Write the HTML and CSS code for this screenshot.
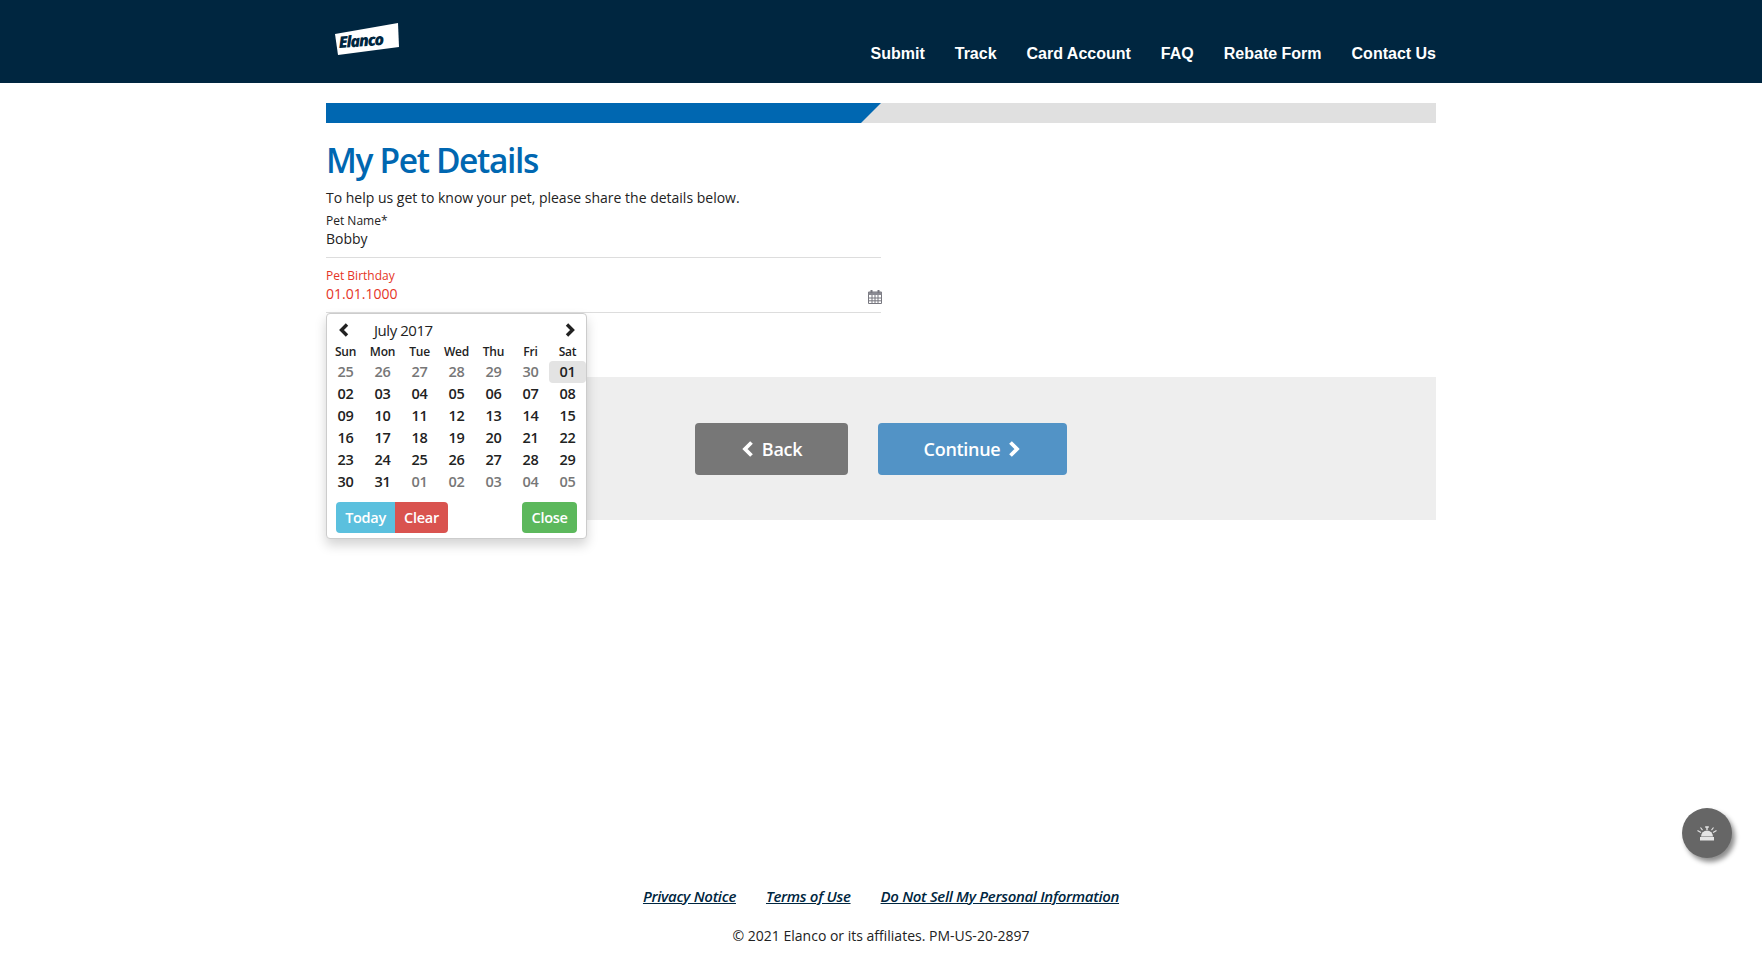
FILE: index.html
```html
<!DOCTYPE html>
<html lang="en">
<head>
<meta charset="utf-8">
<title>My Pet Details</title>
<link rel="stylesheet" href="styles.css">
</head>
<body>
<div class="page">
  <header class="site-header">
    <div class="wrap header-inner">
      <svg class="logo" width="66" height="34" viewBox="0 0 66 34">
        <polygon points="1,11 64,0 65,24 4,32" fill="#fff"/>
        <text x="5" y="25" class="logo-text" transform="rotate(-4 5 25)">Elanco</text>
      </svg>
      <nav class="main-nav">
        <a>Submit</a><a>Track</a><a>Card Account</a><a>FAQ</a><a>Rebate Form</a><a>Contact Us</a>
      </nav>
    </div>
  </header>

  <main class="wrap content">
    <div class="progress"><div class="progress-fill"></div></div>
    <h1 class="title">My Pet Details</h1>
    <p class="intro">To help us get to know your pet, please share the details below.</p>

    <div class="field">
      <label class="field-label">Pet Name*</label>
      <div class="field-value">Bobby</div>
    </div>

    <div class="field field-error">
      <label class="field-label">Pet Birthday</label>
      <div class="field-value">01.01.1000</div>
      <svg class="cal-icon" width="14" height="15" viewBox="0 0 14 15">
        <path d="M.5 3h13v11.5H.5z" fill="#fff" stroke="#77777f"/>
        <path d="M.5 3h13v3H.5z" fill="#8a8a92"/>
        <path d="M1 9h12M1 11.8h12M4 6v8M7 6v8M10 6v8" stroke="#77777f" stroke-width="1" fill="none"/>
        <path d="M3.5 1v3M10.5 1v3" stroke="#77777f" stroke-width="2" fill="none"/>
      </svg>
    </div>

    <section class="actions">
      <a class="btn btn-back">
        <svg class="chev" width="13" height="18" viewBox="0 0 13 18"><path d="M10.5 2.5L4 9l6.5 6.5" fill="none" stroke="#fff" stroke-width="3.8"/></svg>
        Back
      </a>
      <a class="btn btn-next">
        Continue
        <svg class="chev" width="13" height="18" viewBox="0 0 13 18"><path d="M2.5 2.5L9 9l-6.5 6.5" fill="none" stroke="#fff" stroke-width="3.8"/></svg>
      </a>
    </section>

    <div class="datepicker">
      <div class="dp-head">
        <svg class="dp-arrow" width="12" height="14" viewBox="0 0 12 14"><path d="M9 1.5L3.5 7 9 12.5" fill="none" stroke="#222" stroke-width="3.4"/></svg>
        <span class="dp-month">July 2017</span>
        <svg class="dp-arrow dp-arrow-next" width="12" height="14" viewBox="0 0 12 14"><path d="M3 1.5L8.5 7 3 12.5" fill="none" stroke="#222" stroke-width="3.4"/></svg>
      </div>
      <div class="dp-grid dp-dow">
        <span>Sun</span><span>Mon</span><span>Tue</span><span>Wed</span><span>Thu</span><span>Fri</span><span>Sat</span>
      </div>
      <div class="dp-grid dp-days">
        <span class="old">25</span><span class="old">26</span><span class="old">27</span><span class="old">28</span><span class="old">29</span><span class="old">30</span><span class="sel">01</span>
        <span>02</span><span>03</span><span>04</span><span>05</span><span>06</span><span>07</span><span>08</span>
        <span>09</span><span>10</span><span>11</span><span>12</span><span>13</span><span>14</span><span>15</span>
        <span>16</span><span>17</span><span>18</span><span>19</span><span>20</span><span>21</span><span>22</span>
        <span>23</span><span>24</span><span>25</span><span>26</span><span>27</span><span>28</span><span>29</span>
        <span>30</span><span>31</span><span class="old">01</span><span class="old">02</span><span class="old">03</span><span class="old">04</span><span class="old">05</span>
      </div>
      <div class="dp-foot">
        <a class="dp-btn dp-today">Today</a><a class="dp-btn dp-clear">Clear</a><a class="dp-btn dp-close">Close</a>
      </div>
    </div>
  </main>

  <footer class="site-footer">
    <div class="foot-links"><a>Privacy Notice</a><a>Terms of Use</a><a>Do Not Sell My Personal Information</a></div>
    <p class="copyright">© 2021 Elanco or its affiliates. PM-US-20-2897</p>
  </footer>

  <button class="fab" aria-label="Alert">
    <svg width="22" height="16" viewBox="0 0 22 16">
      <path d="M5 11.5a6 6 0 0 1 12 0z" fill="#e4e4e4"/>
      <path d="M4 12h14v3.5H4z" fill="#e4e4e4"/>
      <path d="M9.2 2h3.6M11 2v3" stroke="#e4e4e4" stroke-width="1.4" fill="none"/>
      <path d="M1.5 5.5l3.4 2M20.5 5.5l-3.4 2M4.5 2.5l2 2.6M17.5 2.5l-2 2.6" stroke="#e4e4e4" stroke-width="1.1" fill="none"/>
    </svg>
  </button>
</div>
</body>
</html>
```
FILE: styles.css
```css
* { box-sizing: border-box; }
html, body { margin: 0; padding: 0; }
body {
  font-family: "Open Sans", "Liberation Sans", sans-serif;
  font-size: 14px;
  color: #222;
  background: #fff;
}
.page {
  position: relative;
  min-height: 959px;
  display: flex;
  flex-direction: column;
  overflow: hidden;
}
.wrap { width: 1110px; margin: 0 auto; }

/* Header */
.site-header { background: #002640; height: 83px; }
.header-inner { position: relative; height: 83px; display: flex; justify-content: space-between; }
.logo { margin: 23px 0 0 8px; }
.logo-text {
  font-family: "Open Sans", sans-serif;
  font-weight: 800;
  font-style: italic;
  font-size: 16px;
  letter-spacing: -1.2px;
  fill: #002640;
}
.main-nav { display: flex; gap: 30px; padding-top: 44px; }
.main-nav a {
  font-family: "Liberation Sans", Arial, sans-serif;
  font-weight: 700;
  font-size: 16px;
  line-height: 20px;
  color: #fff;
}

/* Main */
.content { position: relative; padding-top: 20px; }
.progress { height: 20px; background: #e0e0e0; position: relative; overflow: hidden; }
.progress-fill {
  height: 20px;
  width: 555px;
  background: #0067b1;
  clip-path: polygon(0 0, 100% 0, 96.4% 100%, 0 100%);
}
.title {
  margin: 15px 0 0;
  font-size: 33.5px;
  line-height: 44px;
  font-weight: 600;
  color: #0067b1;
  letter-spacing: -1.35px;
}
.intro { margin: 6px 0 0; font-size: 14px; line-height: 20px; color: #222; }

.field {
  position: relative;
  width: 555px;
  height: 50px;
  border-bottom: 1px solid #ddd;
}
.field + .field { margin-top: 5px; }
.field-label { display: block; font-size: 12px; line-height: 16px; padding-top: 5px; height: 21px; }
.field-value { font-size: 14px; line-height: 20px; }
.field-error { color: #e53426; }
.cal-icon { position: absolute; right: -1px; bottom: 8px; }

/* Actions */
.actions {
  margin-top: 64px;
  height: 143px;
  background: #eee;
  display: flex;
  gap: 30px;
  padding: 46px 0 0 369px;
}
.btn {
  height: 52px;
  border-radius: 4px;
  color: #fff;
  font-size: 18px;
  line-height: 24px;
  font-weight: 600;
  display: flex;
  align-items: center;
  justify-content: center;
  gap: 8px;
  letter-spacing: -0.3px;
}
.btn-back { width: 153px; background: #777; }
.btn-next { width: 189px; background: #5293c6; }

/* Datepicker */
.datepicker {
  position: absolute;
  left: 0;
  top: 230px;
  width: 261px;
  height: 226px;
  background: #fff;
  border-radius: 4px;
  border: 1px solid #ccc;
  box-shadow: 0 6px 12px rgba(0, 0, 0, .175);
}
.dp-head { height: 29px; display: flex; align-items: center; position: relative; padding: 2px 0 0 11px; }
.dp-month { margin-left: 24px; font-size: 15px; letter-spacing: -0.45px; }
.dp-arrow-next { margin-left: auto; margin-right: 10px; }
.dp-grid { display: grid; grid-template-columns: repeat(7, 37px); text-align: center; }
.dp-dow { height: 18px; font-size: 12px; font-weight: 600; line-height: 18px; color: #222; letter-spacing: -0.2px; }
.dp-days { font-size: 14.5px; font-weight: 600; letter-spacing: -0.3px; grid-auto-rows: 22px; line-height: 22px; color: #222; }
.dp-days .old { color: #777; }
.dp-days .sel { background: #e3e3e3; border-radius: 4px; }
.dp-foot { display: flex; padding: 9px 9px 0; }
.dp-btn {
  height: 31px;
  line-height: 31px;
  color: #fff;
  font-size: 14.5px;
  font-weight: 600;
  letter-spacing: -0.3px;
  text-align: center;
}
.dp-today { width: 59px; background: #5bc0de; border-radius: 4px 0 0 4px; }
.dp-clear { width: 53px; background: #d9534f; border-radius: 0 4px 4px 0; }
.dp-close { width: 55px; background: #5cb85c; border-radius: 4px; margin-left: auto; }

/* Footer */
.site-footer { margin-top: auto; text-align: center; padding-bottom: 13px; }
.foot-links { display: flex; justify-content: center; gap: 30px; line-height: 20px; }
.foot-links a {
  font-size: 15px;
  font-style: italic;
  font-weight: 600;
  color: #002640;
  text-decoration: underline;
  letter-spacing: -0.32px;
}
.copyright { margin: 20px 0 0; font-size: 14px; line-height: 20px; color: #222; }

/* Floating button */
.fab {
  position: absolute;
  left: 1682px;
  top: 808px;
  width: 50px;
  height: 50px;
  border: 0;
  padding: 0;
  border-radius: 50%;
  background: #666;
  box-shadow: 3px 4px 5px rgba(0, 0, 0, .45);
  display: flex;
  align-items: center;
  justify-content: center;
}
```
